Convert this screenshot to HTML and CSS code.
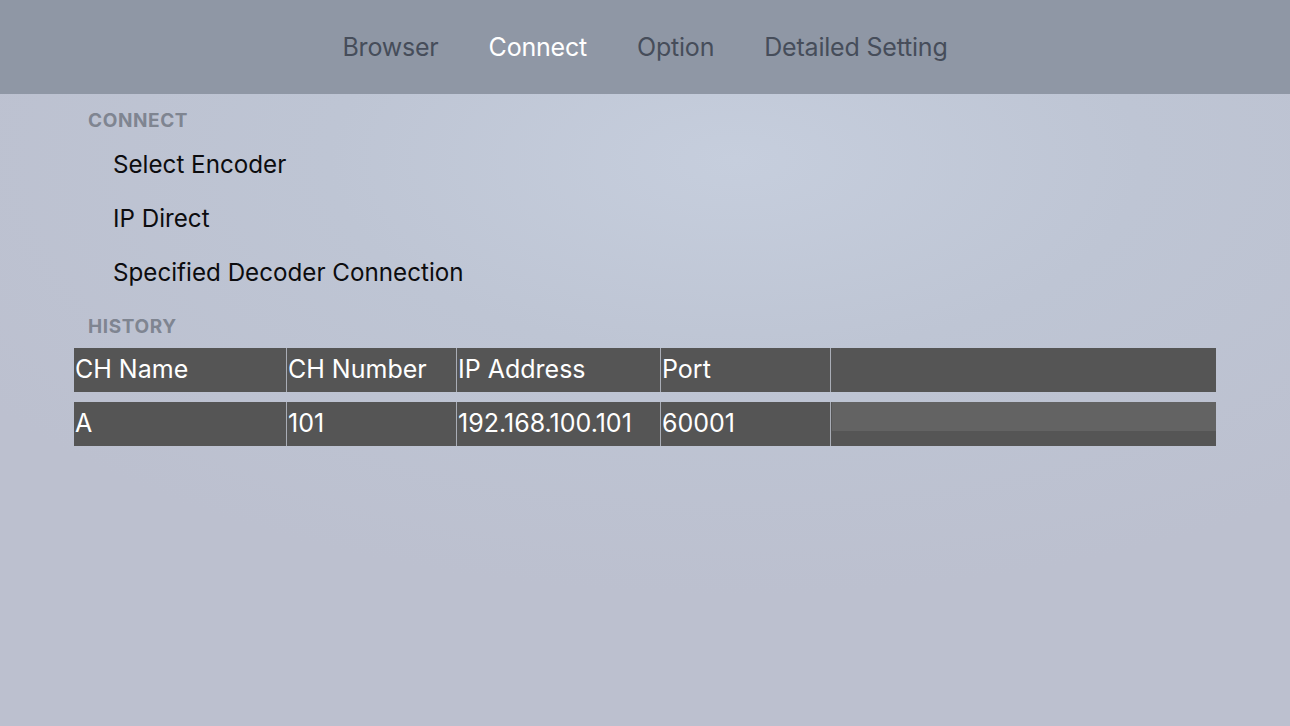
FILE: index.html
```html
<!DOCTYPE html>
<html>
<head>
    <title>Connect</title>
    <link rel="stylesheet" href="styles.css">
</head>
<body>
    <div class="topbar">
        <div class="tab">Browser</div>
        <div class="tab active">Connect</div>
        <div class="tab">Option</div>
        <div class="tab">Detailed Setting</div>
    </div>

    <div class="content">
        <div class="section-title">CONNECT</div>
        <div class="menu">
            <div class="menu-item">Select Encoder</div>
            <div class="menu-item">IP Direct</div>
            <div class="menu-item">Specified Decoder Connection</div>
        </div>

        <div class="section-title history-title">HISTORY</div>
        <div class="history">
            <div class="row">
                <div class="cell">CH Name</div>
                <div class="cell">CH Number</div>
                <div class="cell">IP Address</div>
                <div class="cell">Port</div>
                <div class="cell"></div>
            </div>
            <div class="row">
                <div class="cell">A</div>
                <div class="cell">101</div>
                <div class="cell">192.168.100.101</div>
                <div class="cell">60001</div>
                <div class="cell field"><div class="field-top"></div></div>
            </div>
        </div>
    </div>
</body>
</html>
```

FILE: styles.css
```css
html, body {
    height: 100%;
}

body {
    margin: 0;
    font-family: Inter, "Noto Sans", sans-serif;
    background: radial-gradient(ellipse 70% 60% at 57% 22%, #c6cedd 0%, #bec5d4 45%, #bcc0cf 100%);
    color: #111;
    overflow: hidden;
}

.topbar {
    height: 94px;
    background-color: #8f97a5;
    display: flex;
    justify-content: center;
    align-items: center;
    gap: 50px;
}

.tab {
    font-size: 25px;
    color: #464d5a;
    letter-spacing: -0.2px;
}

.tab.active {
    color: #fff;
}

.content {
    padding-top: 15px;
}

.section-title {
    padding-left: 88px;
    font-size: 19px;
    font-weight: 700;
    line-height: 24px;
    color: #7f8591;
    letter-spacing: 0.6px;
    margin-bottom: 5px;
}

.history-title {
    margin-top: 15px;
    margin-bottom: 9px;
}

.menu-item {
    padding-left: 113px;
    height: 54px;
    line-height: 54px;
    font-size: 24.2px;
    color: #0c0c0e;
}

.history {
    margin: 0 74px;
    display: flex;
    flex-direction: column;
    gap: 10px;
}

.row {
    display: grid;
    grid-template-columns: 212px 169px 203px 169px 1fr;
    gap: 1px;
    height: 44px;
    background-color: #a9adb6;
}

.cell {
    background-color: #555555;
    color: #fff;
    font-size: 25px;
    line-height: 43px;
    padding-left: 1px;
    white-space: nowrap;
    overflow: hidden;
}

.field-top {
    height: 29px;
    background-color: #636363;
}
```
